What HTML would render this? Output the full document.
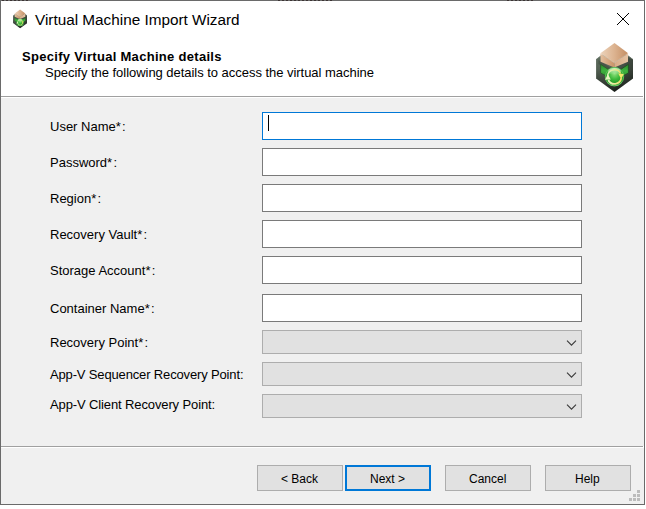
<!DOCTYPE html>
<html><head><meta charset="utf-8">
<style>
html,body{margin:0;padding:0;width:646px;height:509px;overflow:hidden;background:#fff;}
body{position:relative;font-family:"Liberation Sans",sans-serif;color:#000;}
.a{position:absolute;}
.win{left:0;top:0;width:643px;height:503px;border:1px solid #6a6a6a;background:#fff;}
.hdrsep{left:1px;top:96px;width:642px;height:1px;background:#a0a0a0;}
.hdrsep2{left:1px;top:97px;width:643px;height:1px;background:#fff;}
.content{left:1px;top:98px;width:643px;height:406px;background:#f0f0f0;}
.ftsep{left:1px;top:446px;width:643px;height:1px;background:linear-gradient(90deg,#a0a0a0 642px,#fff 642px);}
.ftsep2{left:1px;top:447px;width:643px;height:1px;background:#fff;}
.t{white-space:pre;line-height:1;}
.lbl{left:50px;font-size:13px;}
.tb{left:262px;width:318px;height:26px;border:1px solid #7a7a7a;background:#fff;}
.tb.focus{border-color:#0078d7;}
.cb{left:262px;width:318px;height:22px;border:1px solid #adadad;background:#e1e1e1;}
.btn{top:465px;width:84px;height:24px;border:1px solid #adadad;background:#e1e1e1;font-size:12px;text-align:center;}
.btn.def{border:2px solid #0078d7;width:82px;height:22px;}
</style></head><body>
<div class="a win"></div>
<div class="a content"></div>
<div class="a hdrsep"></div>
<div class="a hdrsep2"></div>
<div class="a ftsep"></div>
<div class="a ftsep2"></div>

<svg class="a" style="left:0;top:0" width="646" height="2"><g fill="#3c3434"><rect x="2" y="0" width="2" height="1"/><rect x="6" y="0" width="2" height="1"/><rect x="10" y="0" width="2" height="1"/><rect x="14" y="0" width="2" height="1"/><rect x="18" y="0" width="2" height="1"/><rect x="22" y="0" width="2" height="1"/><rect x="26" y="0" width="2" height="1"/><rect x="278" y="0" width="2" height="1"/><rect x="282" y="0" width="2" height="1"/><rect x="286" y="0" width="2" height="1"/><rect x="290" y="0" width="2" height="1"/><rect x="294" y="0" width="2" height="1"/><rect x="298" y="0" width="2" height="1"/><rect x="302" y="0" width="2" height="1"/><rect x="306" y="0" width="2" height="1"/><rect x="310" y="0" width="2" height="1"/><rect x="314" y="0" width="2" height="1"/><rect x="318" y="0" width="2" height="1"/><rect x="322" y="0" width="2" height="1"/><rect x="326" y="0" width="2" height="1"/><rect x="330" y="0" width="2" height="1"/><rect x="507" y="0" width="2" height="1"/><rect x="511" y="0" width="2" height="1"/><rect x="515" y="0" width="2" height="1"/><rect x="519" y="0" width="2" height="1"/><rect x="523" y="0" width="2" height="1"/><rect x="527" y="0" width="2" height="1"/><rect x="531" y="0" width="2" height="1"/></g></svg>
<!-- icon symbol -->
<svg width="0" height="0" style="position:absolute">
 <defs>
  <linearGradient id="hexg" x1="0" y1="0" x2="0" y2="1">
   <stop offset="0" stop-color="#6a786a"/><stop offset="0.5" stop-color="#546154"/><stop offset="0.8" stop-color="#363f36"/><stop offset="1" stop-color="#1a1f1a"/>
  </linearGradient>
  <linearGradient id="hexr" x1="0" y1="0" x2="1" y2="0">
   <stop offset="0" stop-color="#000" stop-opacity="0.1"/><stop offset="1" stop-color="#000" stop-opacity="0.35"/>
  </linearGradient>
  <linearGradient id="topg" x1="0" y1="0" x2="1" y2="0">
   <stop offset="0" stop-color="#ecd3bb"/><stop offset="0.5" stop-color="#dcb390"/><stop offset="1" stop-color="#c48d62"/>
  </linearGradient>
  <linearGradient id="lfg" x1="0" y1="0" x2="1" y2="0">
   <stop offset="0" stop-color="#e3bf9e"/><stop offset="1" stop-color="#c99469"/>
  </linearGradient>
  <linearGradient id="rfg" x1="0" y1="0" x2="1" y2="0">
   <stop offset="0" stop-color="#d8ab86"/><stop offset="1" stop-color="#e6c3a3"/>
  </linearGradient>
  <radialGradient id="ballg" cx="0.5" cy="0.35" r="0.65">
   <stop offset="0" stop-color="#8ee07c"/><stop offset="0.45" stop-color="#3cb83a"/><stop offset="0.85" stop-color="#1f8e22"/><stop offset="1" stop-color="#58c45a"/>
  </radialGradient>
  <linearGradient id="hlg" x1="0" y1="0" x2="0" y2="1">
   <stop offset="0" stop-color="#e8ffe0" stop-opacity="0.85"/><stop offset="1" stop-color="#e8ffe0" stop-opacity="0"/>
  </linearGradient>
  <linearGradient id="arrg" x1="0" y1="0" x2="1" y2="0" gradientUnits="objectBoundingBox">
   <stop offset="0" stop-color="#e8f8c4"/><stop offset="1" stop-color="#f0de6a"/>
  </linearGradient>
  <linearGradient id="pang" x1="0" y1="0" x2="0" y2="1">
   <stop offset="0" stop-color="#2c8a2c"/><stop offset="0.5" stop-color="#3fb23f"/><stop offset="1" stop-color="#2a8a2a"/>
  </linearGradient>
  <symbol id="vmicon" viewBox="0 0 38 51">
   <path d="M0 17.2 L18.5 3.7 L37 17.2 L37 36.5 L18.5 50 L0 36.5 Z" fill="url(#hexg)"/>
   <path d="M18.5 3.7 L37 17.2 L37 36.5 L18.5 50 Z" fill="url(#hexr)"/>
   <path d="M0.4 17.4 L0.4 36.3" stroke="#7a857a" stroke-width="0.7" stroke-opacity="0.6"/>
   <path d="M0.5 17.2 L18.5 4.2 L36.5 17.2" fill="none" stroke="#748074" stroke-width="0.8"/>
   <path d="M2.5 18 L17 27.5 L17 31 L2.5 22 Z" fill="#3a463a" fill-opacity="0.5"/>
   <path d="M4.6 22.3 L14 28.6 L13 35.5 L4.6 31 Z" fill="url(#pang)" stroke="#2a5e2a" stroke-width="0.9"/>
   <path d="M23 28.6 L32.4 22.3 L32.4 31 L24 35.5 Z" fill="url(#pang)" stroke="#244f24" stroke-width="0.9"/>
   <path d="M4.4 11.5 L18.3 20.8 L18.3 25.5 L4.6 19.8 Z" fill="url(#lfg)"/>
   <path d="M18.3 20.8 L32.1 11.5 L32 19.8 L18.3 25.5 Z" fill="url(#rfg)"/>
   <path d="M18.5 1 L32.1 11.3 L18.3 20.8 L4.4 11.3 Z" fill="url(#topg)"/>
   <path d="M4.4 11.3 L18.3 20.8 L32.1 11.3" fill="none" stroke="#f3e2d2" stroke-width="0.6" stroke-opacity="0.7"/>
   <circle cx="18.5" cy="34.7" r="9.6" fill="url(#ballg)"/>
   <circle cx="18.5" cy="34.7" r="9.2" fill="none" stroke="#86dc80" stroke-width="0.8" stroke-opacity="0.7"/>
   <ellipse cx="18.5" cy="29.5" rx="6.5" ry="3.4" fill="url(#hlg)"/>
   <path d="M11.6 34.7 A6.9 6.9 0 0 1 24.6 31.5" fill="none" stroke="url(#arrg)" stroke-width="1.5" stroke-opacity="0.9"/>
   <path d="M25.3 36.2 A6.9 6.9 0 0 1 12.3 38" fill="none" stroke="url(#arrg)" stroke-width="1.8"/>
   <path d="M22.2 31.6 L27.8 32.0 L25.2 37.0 Z" fill="#f2e46a"/>
   <path d="M9.0 37.8 L14.8 37.4 L11.9 32.2 Z" fill="#e6f7c0"/>
  </symbol>
 </defs>
</svg>
<svg class="a" style="left:596px;top:42px" width="38" height="51"><use href="#vmicon"/></svg>
<svg class="a" style="left:12.5px;top:8.9px" width="14.6" height="19.8"><use href="#vmicon"/></svg>

<!-- title -->
<div class="a t" style="left:35px;top:12px;font-size:15.3px;">Virtual Machine Import Wizard</div>
<svg class="a" style="left:0;top:0" width="646" height="40">
  <g fill="#000"><rect x="617" y="13" width="1" height="1"/><rect x="628" y="13" width="1" height="1"/><rect x="618" y="14" width="1" height="1"/><rect x="627" y="14" width="1" height="1"/><rect x="619" y="15" width="1" height="1"/><rect x="626" y="15" width="1" height="1"/><rect x="620" y="16" width="1" height="1"/><rect x="625" y="16" width="1" height="1"/><rect x="621" y="17" width="1" height="1"/><rect x="624" y="17" width="1" height="1"/><rect x="622" y="18" width="1" height="1"/><rect x="623" y="18" width="1" height="1"/><rect x="623" y="19" width="1" height="1"/><rect x="622" y="19" width="1" height="1"/><rect x="624" y="20" width="1" height="1"/><rect x="621" y="20" width="1" height="1"/><rect x="625" y="21" width="1" height="1"/><rect x="620" y="21" width="1" height="1"/><rect x="626" y="22" width="1" height="1"/><rect x="619" y="22" width="1" height="1"/><rect x="627" y="23" width="1" height="1"/><rect x="618" y="23" width="1" height="1"/><rect x="628" y="24" width="1" height="1"/><rect x="617" y="24" width="1" height="1"/></g>
</svg>

<!-- header -->
<div class="a t" style="left:22px;top:50px;font-size:13px;font-weight:bold;letter-spacing:0.3px;">Specify Virtual Machine details</div>
<div class="a t" style="left:45px;top:66px;font-size:13px;letter-spacing:-0.035px;">Specify the following details to access the virtual machine</div>

<!-- labels -->
<div class="a t lbl" style="top:120px">User Name<span style="letter-spacing:1.3px">*</span>:</div>
<div class="a t lbl" style="top:156px">Password<span style="letter-spacing:1.3px">*</span>:</div>
<div class="a t lbl" style="top:192px">Region<span style="letter-spacing:1.3px">*</span>:</div>
<div class="a t lbl" style="top:228px">Recovery Vault<span style="letter-spacing:1.3px">*</span>:</div>
<div class="a t lbl" style="top:264px">Storage Account<span style="letter-spacing:1.3px">*</span>:</div>
<div class="a t lbl" style="top:302px">Container Name<span style="letter-spacing:1.3px">*</span>:</div>
<div class="a t lbl" style="top:336px">Recovery Point<span style="letter-spacing:1.3px">*</span>:</div>
<div class="a t lbl" style="top:368px;letter-spacing:-0.15px">App-V Sequencer Recovery Point:</div>
<div class="a t lbl" style="top:398px;letter-spacing:-0.12px">App-V Client Recovery Point:</div>

<!-- text boxes -->
<div class="a tb focus" style="top:112px"></div>
<div class="a" style="left:268px;top:115px;width:1px;height:16px;background:#000"></div>
<div class="a tb" style="top:148px"></div>
<div class="a tb" style="top:184px"></div>
<div class="a tb" style="top:220px"></div>
<div class="a tb" style="top:256px"></div>
<div class="a tb" style="top:294px"></div>

<!-- combos -->
<div class="a cb" style="top:330px"></div>
<div class="a cb" style="top:362px"></div>
<div class="a cb" style="top:394px"></div>
<svg class="a" style="left:0;top:0" width="646" height="509">
  <g stroke="#3a3a3a" stroke-width="1.1" fill="none">
    <path d="M567 340.6 L571.5 345.1 L576 340.6"/>
    <path d="M567 372.6 L571.5 377.1 L576 372.6"/>
    <path d="M567 404.6 L571.5 409.1 L576 404.6"/>
  </g>
</svg>

<!-- buttons -->
<div class="a btn" style="left:257px"></div>
<div class="a btn def" style="left:345px"></div>
<div class="a btn" style="left:445px"></div>
<div class="a btn" style="left:545px"></div>
<div class="a t" style="left:281px;top:473px;font-size:12px;">&lt; Back</div>
<div class="a t" style="left:370px;top:473px;font-size:12px;">Next &gt;</div>
<div class="a t" style="left:469px;top:473px;font-size:12px;">Cancel</div>
<div class="a t" style="left:575px;top:473px;font-size:12px;">Help</div>

<!-- grip -->
<svg class="a" style="left:0;top:0" width="646" height="509">
  <g fill="#bcbcbc">
    <rect x="637" y="490" width="3" height="3"/>
    <rect x="633" y="494" width="3" height="3"/><rect x="637" y="494" width="3" height="3"/>
    <rect x="629" y="498" width="3" height="3"/><rect x="633" y="498" width="3" height="3"/><rect x="637" y="498" width="3" height="3"/>
  </g>
</svg>
</body></html>
